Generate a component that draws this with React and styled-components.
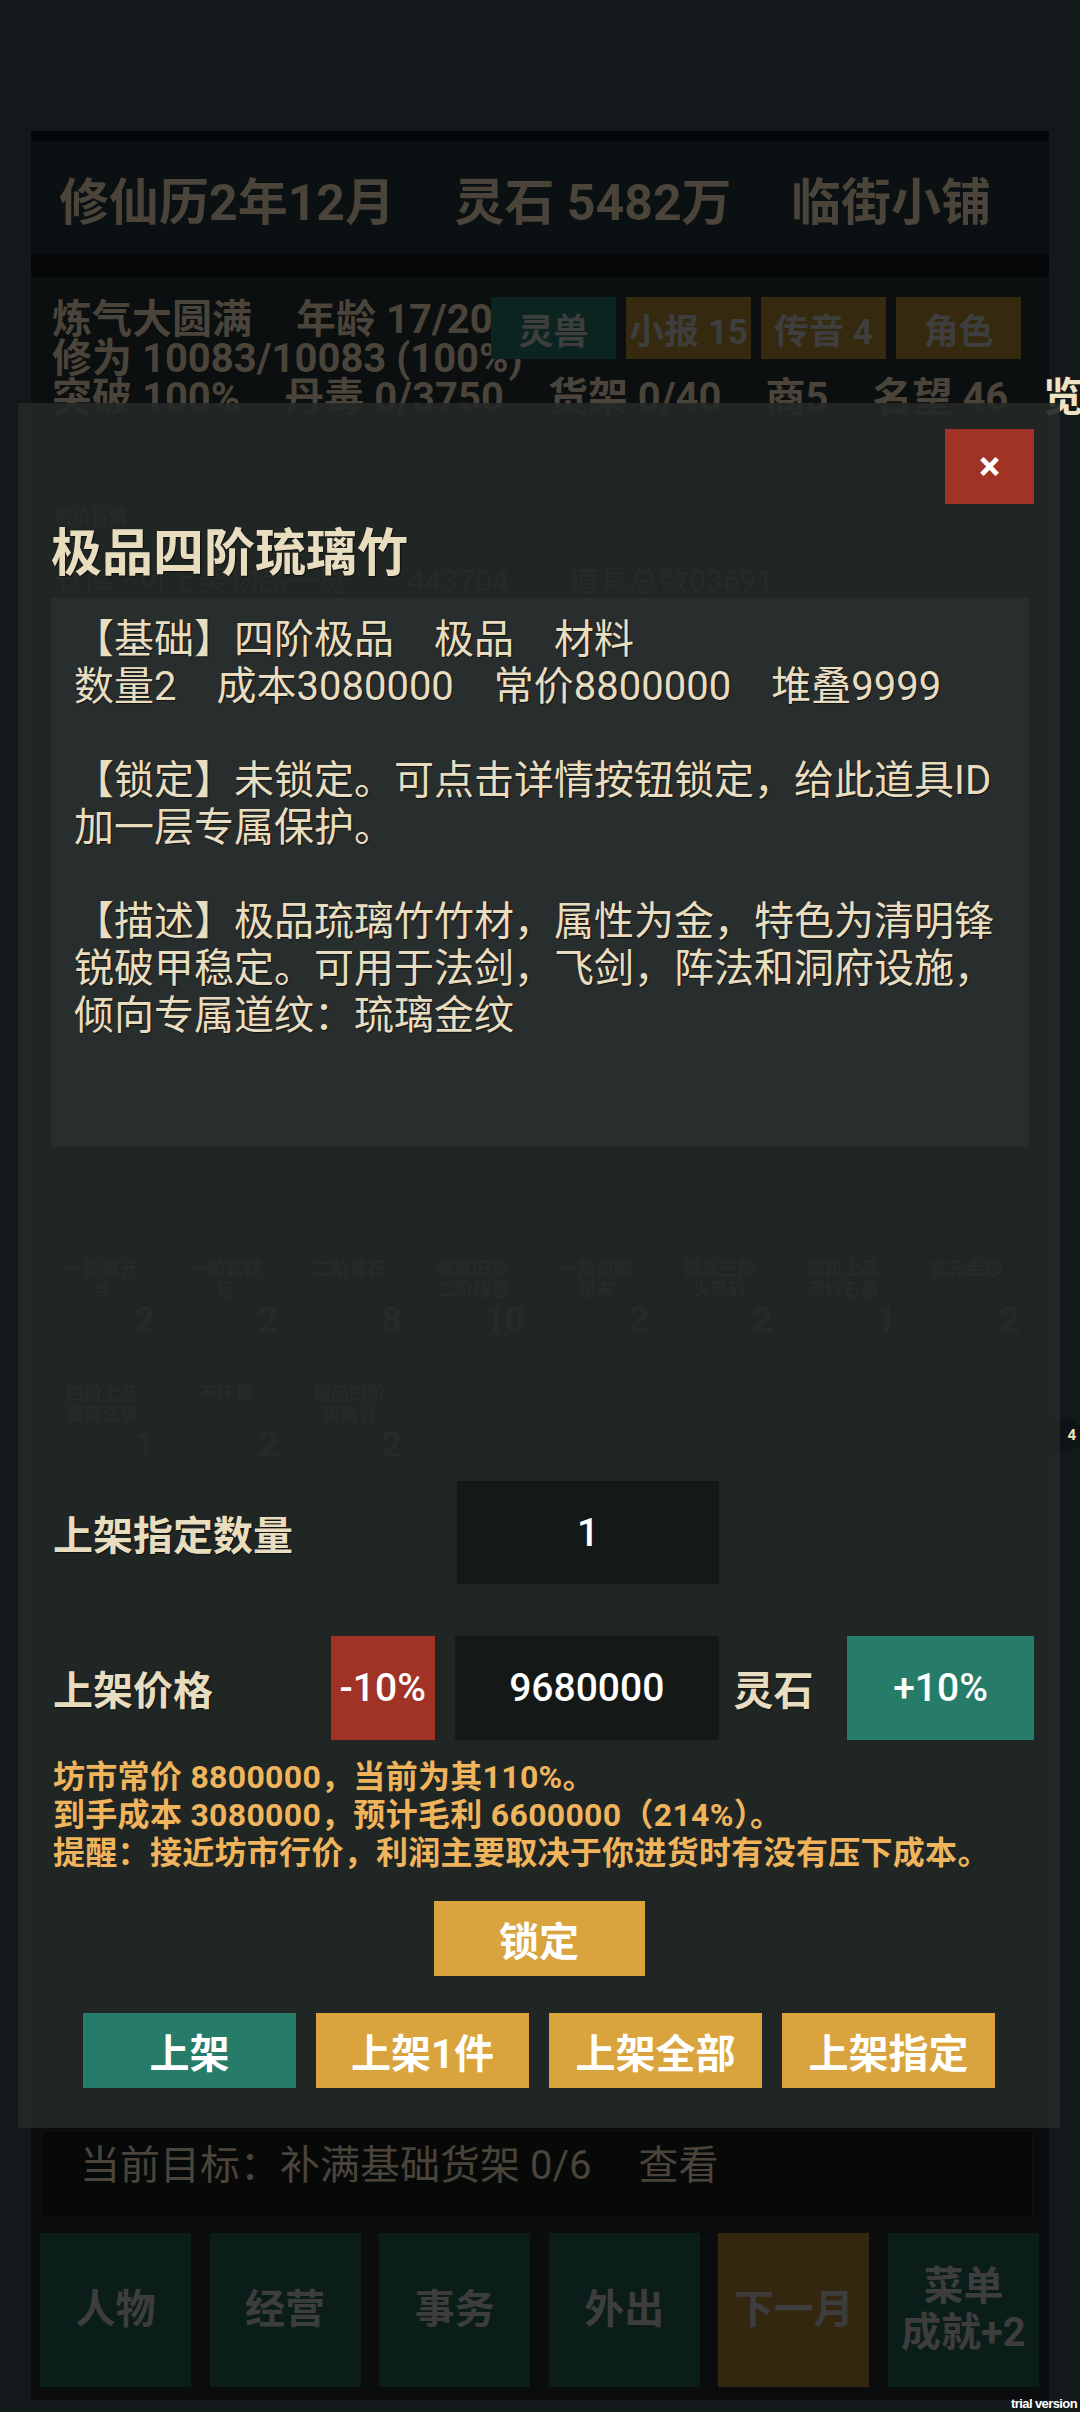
import styled, { createGlobalStyle } from "styled-components";

const GlobalStyle = createGlobalStyle`
  html, body {
    margin: 0;
    padding: 0;
    background: #13181b;
  }
  body {
    font-family: Roboto, "Noto Sans CJK SC", sans-serif;
  }
  * {
    box-sizing: border-box;
  }
  button {
    font-family: inherit;
    border: none;
    padding: 0;
  }
`;

const Screen = styled.div`
  position: relative;
  width: 1080px;
  height: 2412px;
  overflow: hidden;
  background: #13181b;
  padding-top: 131px;
`;

/* ---------- page behind the dialog (already dimmed) ---------- */

const Panel = styled.div`
  width: 1018px;
  height: 2269px;
  margin-left: 31px;
  display: flex;
  flex-direction: column;
  background: #0a0c0d;
  border-top: 10px solid #050709;
  color: #4a443a;
`;

const TopBar = styled.header`
  height: 136px;
  display: flex;
  align-items: center;
  justify-content: space-between;
  padding: 0 58px 0 28px;
  background: #0b1012;
  border-bottom: 23px solid #050709;
  font-size: 50px;
  font-weight: 700;
  white-space: nowrap;
`;

const Status = styled.section`
  position: relative;
  height: 163px;
  padding: 23px 0 0 21px;
  background: #0b0f10;
  font-size: 40px;
  font-weight: 700;
  line-height: 39px;
  white-space: nowrap;
`;

const StatLine = styled.div`
  display: flex;
`;

const Stat = styled.span`
  margin-right: 44px;
`;

const QuickActions = styled.div`
  position: absolute;
  top: 20px;
  right: 28px;
  display: flex;
  gap: 10px;
`;

const QuickButton = styled.button`
  width: 125px;
  height: 62px;
  background: ${(p) => (p.$tone === "green" ? "#0c2420" : "#35290f")};
  color: #3e3e3e;
  font-size: 35px;
  font-weight: 700;
  white-space: nowrap;
`;

const Overview = styled.div`
  height: 815px;
  padding: 66px 0 0 24px;
`;

const OverviewHint = styled.div`
  font-size: 18px;
  line-height: 22px;
  font-weight: 700;
`;

const OverviewLine = styled.div`
  margin-top: 36px;
  display: flex;
  gap: 60px;
  font-size: 30px;
  line-height: 34px;
`;

const Goods = styled.div`
  display: grid;
  grid-template-columns: repeat(8, 116px);
  column-gap: 7.5px;
  row-gap: 9px;
  padding-left: 13px;
`;

const Good = styled.div`
  height: 116px;
  display: flex;
  flex-direction: column;
  padding-top: 3px;
`;

const GoodName = styled.div`
  height: 43px;
  font-size: 18px;
  line-height: 21px;
  font-weight: 700;
  text-align: center;
  white-space: pre-line;
`;

const GoodCount = styled.div`
  margin-left: 14px;
  padding-right: 5px;
  border-left: 1px solid #101415;
  font-size: 36px;
  font-weight: 700;
  line-height: 38px;
  text-align: right;
`;

const Filler = styled.div`
  flex: 1;
`;

const Goal = styled.div`
  height: 88px;
  margin: 0 16px 0 10px;
  display: flex;
  gap: 47px;
  padding: 12px 0 0 38px;
  background: #070909;
  border: 1px solid #0f1213;
  font-size: 40px;
  line-height: 46px;
  white-space: nowrap;
`;

const Nav = styled.nav`
  height: 154px;
  margin: 15px 10px 13px 9px;
  display: grid;
  grid-template-columns: repeat(6, 1fr);
  column-gap: 18.5px;
`;

const NavButton = styled.button`
  background: ${(p) => (p.$tone === "gold" ? "#33270f" : "#0a1d19")};
  color: #3d3d3d;
  font-size: 40px;
  font-weight: 700;
  line-height: 46px;
  white-space: pre-line;
`;

const EdgeTab = styled.div`
  position: absolute;
  left: 1043px;
  top: 376px;
  color: #efe3c6;
  font-size: 40px;
  font-weight: 700;
  line-height: 44px;
`;

const EdgeBadge = styled.div`
  position: absolute;
  left: 1052px;
  top: 1419px;
  width: 30px;
  height: 32px;
  border-radius: 0 16px 16px 0;
  background: #0e1315;
  color: #efe3c6;
  font-size: 15px;
  font-weight: 700;
  line-height: 32px;
  text-align: right;
  padding-right: 6px;
`;

/* ---------- listing dialog ---------- */

const Dialog = styled.div`
  position: absolute;
  left: 18px;
  top: 403px;
  width: 1042px;
  height: 1725px;
  display: flex;
  flex-direction: column;
  padding: 26px 26px 40px 33px;
  background: rgba(35, 41, 39, 0.91);
  color: #e9ddc0;
`;

const CloseRow = styled.div`
  display: flex;
  justify-content: flex-end;
`;

const CloseButton = styled.button`
  width: 89px;
  height: 75px;
  background: #a03226;
  color: #ffffff;
  font-size: 40px;
  font-weight: 700;
`;

const Title = styled.h2`
  margin: 20px 0 0;
  font-size: 51px;
  line-height: 60px;
  font-weight: 700;
  text-shadow: 1px 1px 1px rgba(0, 0, 0, 0.55);
`;

const Details = styled.div`
  width: 978px;
  height: 549px;
  margin-top: 14px;
  padding: 18px 20px 0 23px;
  background: #282d2d;
  font-size: 40px;
  line-height: 47px;
  white-space: pre-wrap;
  text-shadow: 1px 1px 1px rgba(0, 0, 0, 0.55);
`;

const FieldRow = styled.div`
  height: ${(p) => p.$h}px;
  margin-top: ${(p) => p.$gap}px;
  display: flex;
  align-items: center;
`;

const FieldLabel = styled.div`
  width: 281px;
  padding-left: 2px;
  font-size: 40px;
  font-weight: 700;
  text-shadow: 1px 1px 1px rgba(0, 0, 0, 0.55);
`;

const StepButton = styled.button`
  width: ${(p) => p.$w}px;
  height: 100%;
  background: ${(p) => p.$bg};
  color: #ffffff;
  font-size: 39px;
  font-weight: 500;
  white-space: nowrap;
`;

const ValueBox = styled.div`
  width: ${(p) => p.$w}px;
  height: 100%;
  margin-left: ${(p) => p.$offset}px;
  display: flex;
  align-items: center;
  justify-content: center;
  background: #141918;
  color: #ffffff;
  font-size: 39px;
  font-weight: 500;
`;

const Unit = styled.div`
  width: 114px;
  margin-left: 15px;
  font-size: 40px;
  font-weight: 700;
  text-shadow: 1px 1px 1px rgba(0, 0, 0, 0.55);
`;

const Notes = styled.div`
  margin-top: 18px;
  padding-left: 2px;
  color: #efb45c;
  font-size: 32px;
  line-height: 38px;
  font-weight: 700;
  letter-spacing: 0.3px;
  white-space: nowrap;
`;

const LockButton = styled.button`
  align-self: center;
  width: 211px;
  height: 75px;
  margin: 29px 7px 0 0;
  background: #d9a43e;
  color: #ffffff;
  font-size: 40px;
  font-weight: 700;
`;

const Actions = styled.div`
  margin-top: 37px;
  padding-right: 7px;
  display: flex;
  justify-content: center;
  gap: 20px;
`;

const ActionButton = styled.button`
  width: 213px;
  height: 75px;
  background: ${(p) => (p.$primary ? "#267c69" : "#d9a43e")};
  color: #ffffff;
  font-size: 40px;
  font-weight: 700;
`;

const Watermark = styled.div`
  position: absolute;
  right: 3px;
  bottom: 1px;
  color: #ffffff;
  font-size: 13px;
  font-weight: 700;
  letter-spacing: -0.6px;
  font-family: "Liberation Sans", sans-serif;
`;

const goods = [
  { name: "一阶聚元\n丝", count: 2 },
  { name: "一阶玄铁\n锭", count: 2 },
  { name: "二阶青石", count: 8 },
  { name: "筑基旧货\n二阶残卷", count: 10 },
  { name: "一阶灵砂\n粉末", count: 2 },
  { name: "极品三阶\n火灵砂", count: 2 },
  { name: "四阶上品\n灵纹石晶", count: 1 },
  { name: "玄元金砂", count: 2 },
  { name: "四阶上品\n聚灵法盘", count: 1 },
  { name: "不坏骨", count: 2 },
  { name: "极品四阶\n琉璃竹", count: 2 },
];

const detailText = `【基础】四阶极品\u3000极品\u3000材料
数量2\u3000成本3080000\u3000常价8800000\u3000堆叠9999

【锁定】未锁定。可点击详情按钮锁定，给此道具ID加一层专属保护。

【描述】极品琉璃竹竹材，属性为金，特色为清明锋锐破甲稳定。可用于法剑，飞剑，阵法和洞府设施，倾向专属道纹：琉璃金纹`;

export default function App() {
  return (
    <>
      <GlobalStyle />
      <Screen>
        <Panel>
          <TopBar>
            <span>修仙历2年12月</span>
            <span>灵石 5482万</span>
            <span>临街小铺</span>
          </TopBar>

          <Status>
            <StatLine>
              <Stat>炼气大圆满</Stat>
              <Stat>年龄 17/200</Stat>
            </StatLine>
            <StatLine>
              <Stat>修为 10083/10083 (100%)</Stat>
            </StatLine>
            <StatLine>
              <Stat>突破 100%</Stat>
              <Stat>丹毒 0/3750</Stat>
              <Stat>货架 0/40</Stat>
              <Stat>商5</Stat>
              <Stat>名望 46</Stat>
            </StatLine>
            <QuickActions>
              <QuickButton $tone="green">灵兽</QuickButton>
              <QuickButton>小报 15</QuickButton>
              <QuickButton>传音 4</QuickButton>
              <QuickButton>角色</QuickButton>
            </QuickActions>
          </Status>

          <Overview>
            <OverviewHint>时价行情</OverviewHint>
            <OverviewLine>
              <span>仓库 · 可上架物品一览</span>
              <span>443704</span>
              <span>道具总数03691</span>
            </OverviewLine>
          </Overview>

          <Goods>
            {goods.map((g) => (
              <Good key={g.name}>
                <GoodName>{g.name}</GoodName>
                <GoodCount>{g.count}</GoodCount>
              </Good>
            ))}
          </Goods>

          <Filler />

          <Goal>
            <span>当前目标：补满基础货架 0/6</span>
            <span>查看</span>
          </Goal>

          <Nav>
            <NavButton>人物</NavButton>
            <NavButton>经营</NavButton>
            <NavButton>事务</NavButton>
            <NavButton>外出</NavButton>
            <NavButton $tone="gold">下一月</NavButton>
            <NavButton>{"菜单\n成就+2"}</NavButton>
          </Nav>
        </Panel>

        <EdgeTab>览</EdgeTab>
        <EdgeBadge>4</EdgeBadge>

        <Dialog>
          <CloseRow>
            <CloseButton>×</CloseButton>
          </CloseRow>
          <Title>极品四阶琉璃竹</Title>
          <Details>{detailText}</Details>

          <FieldRow $h={103} $gap={334}>
            <FieldLabel>上架指定数量</FieldLabel>
            <ValueBox $w={262} $offset={125}>1</ValueBox>
          </FieldRow>

          <FieldRow $h={104} $gap={52}>
            <FieldLabel>上架价格</FieldLabel>
            <StepButton $w={105} $bg="#a03226">-10%</StepButton>
            <ValueBox $w={265} $offset={20}>9680000</ValueBox>
            <Unit>灵石</Unit>
            <StepButton $w={188} $bg="#267c69">+10%</StepButton>
          </FieldRow>

          <Notes>
            <div>坊市常价 8800000，当前为其110%。</div>
            <div>到手成本 3080000，预计毛利 6600000（214%）。</div>
            <div>提醒：接近坊市行价，利润主要取决于你进货时有没有压下成本。</div>
          </Notes>

          <LockButton>锁定</LockButton>

          <Actions>
            <ActionButton $primary>上架</ActionButton>
            <ActionButton>上架1件</ActionButton>
            <ActionButton>上架全部</ActionButton>
            <ActionButton>上架指定</ActionButton>
          </Actions>
        </Dialog>

        <Watermark>trial version</Watermark>
      </Screen>
    </>
  );
}
